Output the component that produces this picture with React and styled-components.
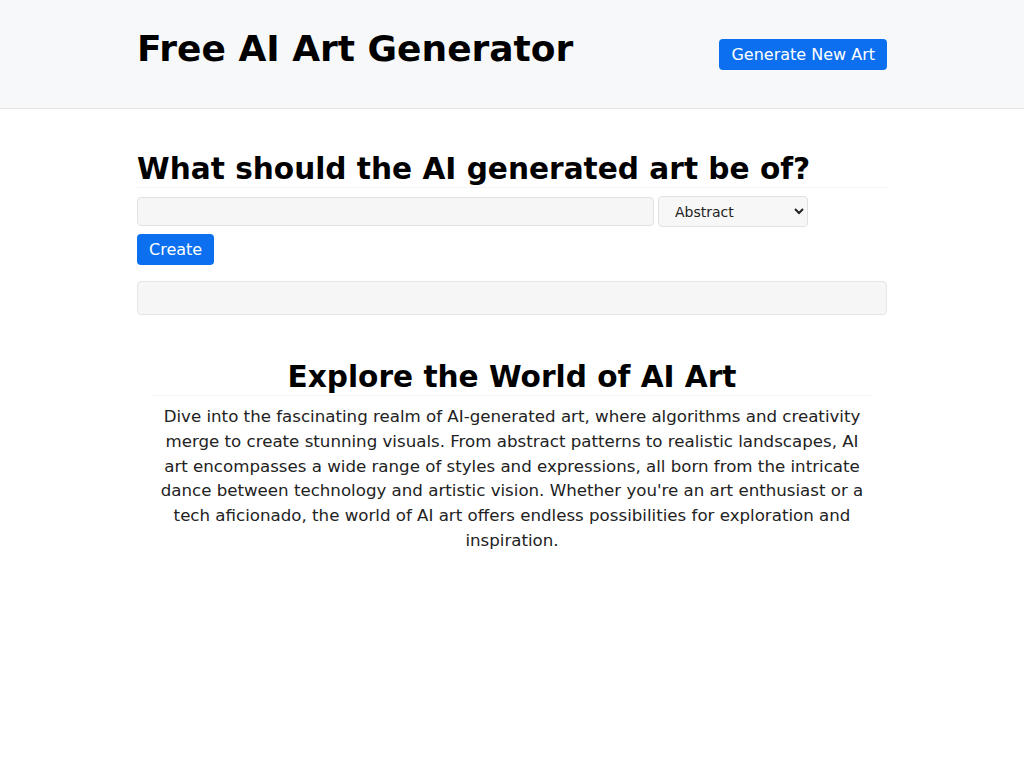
import React from 'react';
import styled, { createGlobalStyle } from 'styled-components';

const GlobalStyle = createGlobalStyle`
    body {
        margin: 0;
        background: #fff;
        font-family: "DejaVu Sans", Verdana, sans-serif;
        color: #212529;
    }
`;

const Header = styled.header`
    background: #f7f8f9;
    border-bottom: 1px solid #e6e6e6;
    height: 109px;
    box-sizing: border-box;
`;

const Container = styled.div`
    width: 750px;
    margin: 0 auto;
`;

const HeaderInner = styled(Container)`
    display: flex;
    justify-content: space-between;
    align-items: flex-start;
    padding-top: 27px;
`;

const Title = styled.h1`
    margin: 0;
    font-size: 36px;
    font-weight: bold;
    color: #000;
    line-height: 44px;
`;

const Button = styled.button`
    background: #0b6ff0;
    color: #fff;
    border: none;
    border-radius: 4px;
    font-family: inherit;
    font-size: 16px;
    height: 31px;
    padding: 0 12px;
    cursor: pointer;
`;

const HeaderButton = styled(Button)`
    margin-top: 12px;
`;

const Main = styled(Container)`
    padding-top: 42px;
`;

const Heading = styled.h2`
    margin: 0;
    font-size: 29.6px;
    font-weight: bold;
    color: #000;
    line-height: 36px;
    border-bottom: 1px solid #f5f5f5;
    text-align: ${(p) => (p.$center ? 'center' : 'left')};
`;

const FormRow = styled.div`
    display: flex;
    align-items: center;
    gap: 4px;
    margin-top: 8px;
`;

const TextInput = styled.input`
    width: 517px;
    height: 29px;
    box-sizing: border-box;
    background: #f6f6f6;
    border: 1px solid #e2e2e2;
    border-radius: 4px;
`;

const Select = styled.select`
    width: 150px;
    height: 31px;
    box-sizing: border-box;
    background: #f7f7f7;
    border: 1px solid #e2e2e2;
    border-radius: 4px;
    font-family: inherit;
    font-size: 14px;
    color: #222;
    padding: 0 12px;
`;

const ButtonRow = styled.div`
    margin-top: 7px;
`;

const ResultBox = styled.div`
    margin-top: 16px;
    height: 34px;
    box-sizing: border-box;
    background: #f6f6f6;
    border: 1px solid #e6e6e6;
    border-radius: 4px;
`;

const Explore = styled.section`
    margin: 44px 15px 0;
`;

const Paragraph = styled.p`
    margin: 9px 8px 0;
    font-size: 16.65px;
    line-height: 24.8px;
    text-align: center;
    color: #222;
`;

export default function App() {
    return (
        <>
            <GlobalStyle />
            <Header>
                <HeaderInner>
                    <Title>Free AI Art Generator</Title>
                    <HeaderButton>Generate New Art</HeaderButton>
                </HeaderInner>
            </Header>
            <Main>
                <Heading>What should the AI generated art be of?</Heading>
                <FormRow>
                    <TextInput type="text" />
                    <Select defaultValue="Abstract">
                        <option>Abstract</option>
                        <option>Realistic</option>
                        <option>Surreal</option>
                    </Select>
                </FormRow>
                <ButtonRow>
                    <Button>Create</Button>
                </ButtonRow>
                <ResultBox />
                <Explore>
                    <Heading $center>Explore the World of AI Art</Heading>
                    <Paragraph>
                        Dive into the fascinating realm of AI-generated art, where algorithms and creativity merge
                        to create stunning visuals. From abstract patterns to realistic landscapes, AI art
                        encompasses a wide range of styles and expressions, all born from the intricate dance
                        between technology and artistic vision. Whether you're an art enthusiast or a tech
                        aficionado, the world of AI art offers endless possibilities for exploration and
                        inspiration.
                    </Paragraph>
                </Explore>
            </Main>
        </>
    );
}
